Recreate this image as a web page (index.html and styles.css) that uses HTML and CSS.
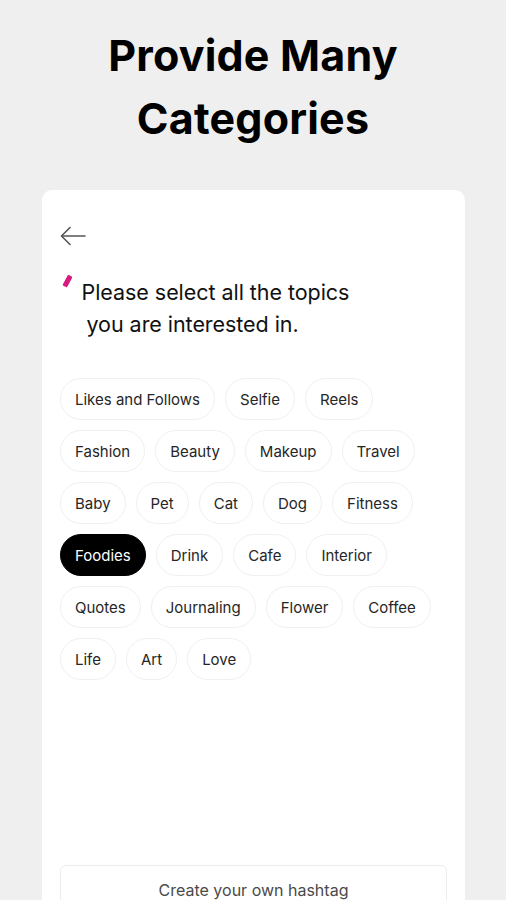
FILE: index.html
```html
<!DOCTYPE html>
<html lang="en">
<head>
    <meta charset="UTF-8">
    <meta name="viewport" content="width=device-width, initial-scale=1.0">
    <title>Provide Many Categories</title>
    <link rel="stylesheet" href="styles.css">
</head>
<body>
    <h1 class="headline">Provide Many<br>Categories</h1>

    <div class="card">
        <button class="back" aria-label="Back">
            <svg width="26" height="20" viewBox="0 0 26 20" fill="none" stroke="#555" stroke-width="1.6" stroke-linecap="round" stroke-linejoin="round">
                <path d="M25 10H2"/>
                <path d="M10 1.5L1.5 10L10 18.5"/>
            </svg>
        </button>

        <div class="prompt">
            <span class="mark"></span>
            <p class="prompt-text">Please select all the topics<br><span class="indent">you are interested in.</span></p>
        </div>

        <div class="chips">
            <span class="chip">Likes and Follows</span>
            <span class="chip">Selfie</span>
            <span class="chip">Reels</span>
            <span class="chip">Fashion</span>
            <span class="chip">Beauty</span>
            <span class="chip">Makeup</span>
            <span class="chip">Travel</span>
            <span class="chip">Baby</span>
            <span class="chip">Pet</span>
            <span class="chip">Cat</span>
            <span class="chip">Dog</span>
            <span class="chip">Fitness</span>
            <span class="chip selected">Foodies</span>
            <span class="chip">Drink</span>
            <span class="chip">Cafe</span>
            <span class="chip">Interior</span>
            <span class="chip">Quotes</span>
            <span class="chip">Journaling</span>
            <span class="chip">Flower</span>
            <span class="chip">Coffee</span>
            <span class="chip">Life</span>
            <span class="chip">Art</span>
            <span class="chip">Love</span>
        </div>

        <button class="own-tag">Create your own hashtag</button>
    </div>
</body>
</html>
```

FILE: styles.css
```css
body, html {
    margin: 0;
    padding: 0;
    font-family: Inter, "Noto Sans", sans-serif;
    background-color: #efefef;
    overflow: hidden;
    height: 900px;
}

.headline {
    margin: 0;
    padding-top: 24px;
    font-size: 43px;
    line-height: 63px;
    font-weight: 700;
    text-align: center;
    color: #000;
    letter-spacing: 0.2px;
}

/* card is cut off by the bottom of the screen */
.card {
    margin: 40px 41px 0 42px;
    height: 710px;
    overflow: hidden;
    box-sizing: border-box;
    padding: 36px 18px 0 18px;
    background-color: #fff;
    border-radius: 10px 10px 0 0;
    display: flex;
    flex-direction: column;
}

.back {
    align-self: flex-start;
    background: none;
    border: none;
    padding: 0;
    height: 20px;
    cursor: pointer;
}

.back svg {
    display: block;
}

.prompt {
    display: flex;
    align-items: flex-start;
    margin-top: 30px;
}

.mark {
    width: 4.5px;
    height: 12px;
    margin: -1px 0 0 5px;
    background-color: #d61a7f;
    border-radius: 1px;
    transform: rotate(28deg);
}

.prompt-text {
    margin: 0 0 0 12px;
    font-size: 21.5px;
    line-height: 32px;
    color: #111;
    letter-spacing: -0.05px;
}

.indent {
    margin-left: 5px;
}

.chips {
    display: flex;
    flex-wrap: wrap;
    gap: 10px;
    margin-top: 38px;
}

.chip {
    height: 42px;
    box-sizing: border-box;
    padding: 0 14px;
    display: flex;
    align-items: center;
    border: 1.5px solid #f0f0f0;
    border-radius: 21px;
    font-size: 15px;
    color: #262626;
}

.chip.selected {
    background-color: #000;
    border-color: #000;
    color: #fff;
}

.own-tag {
    flex-shrink: 0;
    margin-top: auto;
    margin-bottom: -15px;
    height: 50px;
    background: #fff;
    border: 1.5px solid #ececec;
    border-radius: 6px;
    font-family: Inter, "Noto Sans", sans-serif;
    font-size: 16px;
    color: #4a4a4a;
}
```
